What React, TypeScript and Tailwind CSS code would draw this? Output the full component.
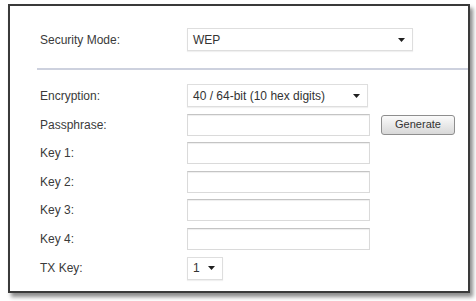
const keys = ['Passphrase:', 'Key 1:', 'Key 2:', 'Key 3:', 'Key 4:'];

function Arrow() {
  return (
    <svg width="7" height="4" viewBox="0 0 7 4" className="shrink-0">
      <path d="M0 0h7L3.5 4z" fill="#1f1f1f" />
    </svg>
  );
}

function Select({ value, width }: { value: string; width: string }) {
  return (
    <div
      className={`flex h-[23px] ${width} items-center justify-between border border-[#dedede] bg-white pl-[5px] pr-[7px] shadow-[0_1px_1px_rgba(0,0,0,0.06)]`}
    >
      <span className="text-[12px] text-[#333]">{value}</span>
      <Arrow />
    </div>
  );
}

export default function App() {
  return (
    <div className="h-[301px] w-[476px] bg-white pl-[8px] pt-[4px]" style={{ fontFamily: '"Liberation Sans", Arial, sans-serif' }}>
      <div className="h-[289px] w-[462px] border-2 border-[#3a3a3a] bg-white shadow-[3px_4px_4px_rgba(0,0,0,0.45)]">
        <div className="flex items-center pl-[30px] pt-[22px]">
          <span className="w-[147px] text-[12px] text-[#3a3a3a]">Security Mode:</span>
          <Select value="WEP" width="w-[226px]" />
        </div>
        <div className="ml-[27px] mt-[17px] h-[2px] bg-[#cdd1de]" />
        <div className="flex flex-col gap-[6.6px] pl-[30px] pt-[14px]">
          <div className="flex items-center">
            <span className="w-[147px] text-[12px] text-[#3a3a3a]">Encryption:</span>
            <Select value="40 / 64-bit (10 hex digits)" width="w-[181px]" />
          </div>
          {keys.map((k, i) => (
            <div key={k} className="flex h-[22px] items-center">
              <span className="w-[147px] text-[12px] text-[#3a3a3a]">{k}</span>
              <div className="h-[22px] w-[183px] border border-[#dadada] border-t-[#c4c4c4] bg-white shadow-[inset_0_1px_1px_rgba(0,0,0,0.07)]" />
              {i === 0 && (
                <button className="ml-[11px] h-[20px] w-[74px] rounded-[3px] border border-[#8e8e8e] bg-gradient-to-b from-[#fbfbfb] to-[#d8d8d8] text-[11px] text-[#333]">
                  Generate
                </button>
              )}
            </div>
          ))}
          <div className="flex items-center">
            <span className="w-[147px] text-[12px] text-[#3a3a3a]">TX Key:</span>
            <Select value="1" width="w-[36px]" />
          </div>
        </div>
      </div>
    </div>
  );
}
